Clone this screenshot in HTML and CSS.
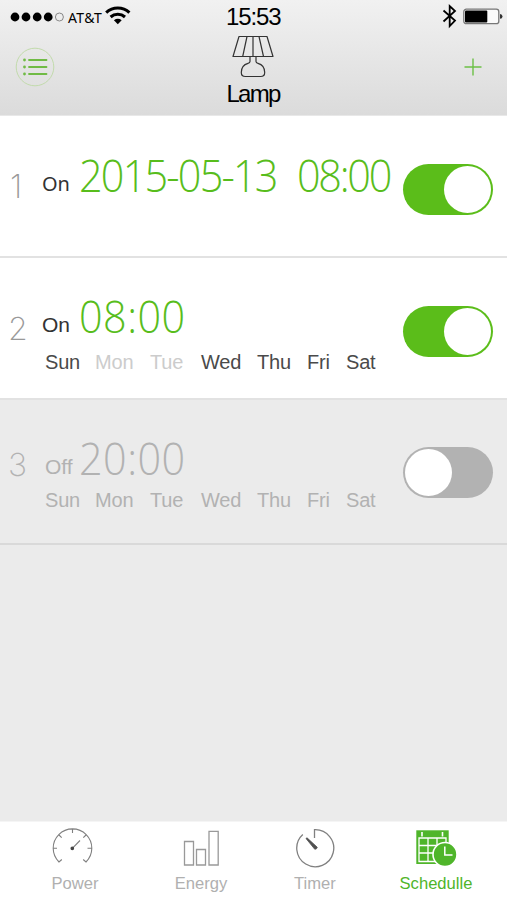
FILE: index.html
```html
<!DOCTYPE html>
<html lang="en">
<head>
<meta charset="utf-8">
<title>Lamp schedule</title>
<link rel="stylesheet" href="styles.css">
</head>
<body>
<div class="app">
  <header class="header">
    <div class="status">
      <div class="carrier">
        <svg class="signal" width="55" height="12" viewBox="0 0 55 12"><circle cx="5" cy="6" r="4.4"/><circle cx="16" cy="6" r="4.4"/><circle cx="27.2" cy="6" r="4.4"/><circle cx="38.2" cy="6" r="4.4"/><circle cx="49.4" cy="6" r="4" fill="none" stroke="#888" stroke-width="1"/></svg>
        <span class="operator">AT&amp;T</span>
        <svg class="wifi" width="26" height="20" viewBox="0 0 26 20"><path d="M1.2 7.6a17 17 0 0 1 23.2 0M5.6 12a11 11 0 0 1 14.4 0" fill="none" stroke="#000" stroke-width="3.1"/><path d="M8.9 15.2Q12.8 12.4 16.7 15.2L12.8 19.2Z"/></svg>
      </div>
      <div class="clock">15:53</div>
      <div class="power-state">
        <svg width="16" height="26" viewBox="0 0 16 26"><path d="M1.5 7.5L13 17.5L7.7 23V3L13 8L1.5 18.5" fill="none" stroke="#000" stroke-width="1.8"/></svg>
        <svg width="40" height="18" viewBox="0 0 40 18"><rect x=".8" y="1.2" width="35" height="14.5" rx="2.5" fill="#fafafa" stroke="#777" stroke-width="1.3"/><rect x="2" y="2.4" width="22.3" height="12.2" rx="1"/><path d="M37 6q2.5 .3 2.5 2.4T37 10.8z" fill="#333"/></svg>
      </div>
    </div>
    <div class="nav">
      <svg class="menu" width="40" height="40" viewBox="0 0 40 40"><circle cx="20" cy="20" r="18.8" fill="none" stroke="#c2dbac" stroke-width="1"/><path d="M14 13h17.5M14 20h17.5M14 27h17.5" fill="none" stroke="#70bb45" stroke-width="1.8" stroke-linecap="round"/><g fill="#70bb45"><circle cx="9.5" cy="13" r="1.4"/><circle cx="9.5" cy="20" r="1.4"/><circle cx="9.5" cy="27" r="1.4"/></g></svg>
      <div class="device">
        <svg width="42" height="43" viewBox="0 0 42 43" fill="none" stroke="#333" stroke-width="1.2" stroke-linejoin="round"><path d="M7 1.500h28L41 21.500H1zM15 1.500L10.700 21.500M21 1.500V21.500M27 1.500L31.500 21.500M18 21.500V26.500Q18 28 16 28.300C11.500 29.500 9.300 33 9.300 37.500Q9.300 41.500 13.300 41.500H28.700Q32.700 41.500 32.700 37.500C32.700 33 30.500 29.500 26 28.300Q24 28 24 26.500V21.500"/></svg>
        <div class="device-name">Lamp</div>
      </div>
      <svg class="add" width="20" height="20" viewBox="0 0 20 20"><path d="M1.5 10h17M10 1.500v17" stroke="#6cc046" stroke-width="1.4"/></svg>
    </div>
  </header>
  <main class="list">
    <section class="row dated">
      <div class="index">1</div>
      <div class="info">
        <div class="when"><span class="state">On</span><span class="time date">2015-05-13</span><span class="time hour">08:00</span></div>
      </div>
      <div class="switch"><div class="knob"></div></div>
    </section>
    <section class="row weekly">
      <div class="index">2</div>
      <div class="info">
        <div class="when"><span class="state">On</span><span class="time">08:00</span></div>
        <div class="days"><span>Sun</span><span class="skip">Mon</span><span class="skip">Tue</span><span>Wed</span><span>Thu</span><span>Fri</span><span>Sat</span></div>
      </div>
      <div class="switch"><div class="knob"></div></div>
    </section>
    <section class="row weekly off">
      <div class="index">3</div>
      <div class="info">
        <div class="when"><span class="state">Off</span><span class="time">20:00</span></div>
        <div class="days"><span>Sun</span><span>Mon</span><span>Tue</span><span>Wed</span><span>Thu</span><span>Fri</span><span>Sat</span></div>
      </div>
      <div class="switch"><div class="knob"></div></div>
    </section>
  </main>
  <nav class="tabs">
    <div class="tab power">
      <svg width="42" height="42" viewBox="0 0 42 42" fill="none" stroke="#808080" stroke-width="1.1"><path d="M9.800 32.500L7 35A19.300 19.300 0 1 1 34 35L31.200 32.500M1.500 21.300H5M35.500 21.300H39.500M20.500 2V6M7 8L9.700 10.700M34 8L31.300 10.700M20.300 21.300L28 13.500"/><circle cx="20.300" cy="21.300" r="1.300" fill="#444" stroke="#444"/></svg>
      <span>Power</span>
    </div>
    <div class="tab energy">
      <svg width="42" height="42" viewBox="0 0 42 42" fill="none" stroke="#999" stroke-width="1.300"><path d="M4.500 14.500H13.500V38H4.500zM16.500 22.500H25.500V38H16.500zM29 4.300H38.200V38H29z"/></svg>
      <span>Energy</span>
    </div>
    <div class="tab timer">
      <svg width="42" height="42" viewBox="0 0 42 42" fill="none" stroke="#808080" stroke-width="1.300"><path d="M20.500 11V2.700A18.500 18.500 0 1 1 8.800 7.500"/><path d="M12 11.500L13 10.800L23.300 20.300Q22.800 22.300 20.800 22.300Z" fill="#505050" stroke="#505050" stroke-width=".8"/></svg>
      <span>Timer</span>
    </div>
    <div class="tab schedule">
      <svg width="42" height="42" viewBox="0 0 42 42"><rect x="1.300" y="3.300" width="32.400" height="33.700" fill="#4fb52a"/><path d="M4 11H31V34.500H4z" fill="none" stroke="#fff" stroke-width="1.300"/><path d="M4 18.500H31M4 26H31M13 11V34.500M22 11V34.500" stroke="#fff" stroke-width="1.300"/><path d="M7 5V9.500M27.500 5V9.500" stroke="#fff" stroke-width="1.600"/><circle cx="30" cy="27.500" r="12" fill="#4fb52a" stroke="#fff" stroke-width="1.600"/><path d="M29.800 19.500V28H37.500" fill="none" stroke="#fff" stroke-width="1.500"/></svg>
      <span>Schedulle</span>
    </div>
  </nav>
</div>
</body>
</html>
```
FILE: styles.css
```css
* { box-sizing: border-box; }
body { margin: 0; background: #ebebeb; font-family: "Liberation Sans", Arial, sans-serif; }
svg { display: block; flex: none; }
.app { width: 507px; height: 900px; display: flex; flex-direction: column; overflow: hidden; }

.header { height: 116px; flex: none; background: linear-gradient(#f1f1f1, #e6e6e6 50%, #dbdbdb); border-bottom: 1px solid #e8e8e8; }
.status { height: 33px; display: grid; grid-template-columns: 226px 60px 1fr; }
.carrier { display: flex; align-items: flex-start; padding-left: 10px; }
.signal { margin-top: 11px; }
.operator { font: 14px/20px "Noto Sans", sans-serif; margin: 8px 0 0 3px; width: 36px; white-space: nowrap; letter-spacing: .4px; }
.wifi { margin: 5px 0 0 1px; }
.clock { font-size: 24px; line-height: 34px; letter-spacing: -1.1px; white-space: nowrap; }
.power-state { display: flex; justify-content: flex-end; padding: 3px 4px 0 0; gap: 5px; }
.power-state svg:last-child { margin-top: 5px; }
.nav { display: grid; grid-template-columns: 208px 60px 1fr; padding: 0 24px 0 15px; }
.menu { margin-top: 14px; }
.device { display: flex; flex-direction: column; align-items: center; margin: 2px 0 0 0; }
.device-name { font-size: 24px; line-height: 30px; letter-spacing: -1.7px; margin-top: 1px; }
.add { margin-top: 24px; justify-self: end; }

.list { flex: 1; }
.row { display: flex; height: 142px; background: #fff; border-bottom: 2px solid #e2e2e2; }
.row.off { height: 145px; background: #ebebeb; border-bottom-color: #d9d9d9; }
.index { width: 42px; padding: 51px 0 0 8px; font: 200 32px/40px Inter, sans-serif; color: #999; }
.dated .index { padding-left: 10px; }
.off .index { padding-top: 45px; }
.info { width: 361px; }
.when { display: flex; height: 80px; padding-top: 28px; white-space: nowrap; }
.state { width: 37px; font-size: 21px; line-height: 28px; margin-top: 25px; color: #333; }
.off .state { padding-left: 3px; }
.dated .state { font-family: "Noto Sans", sans-serif; font-size: 20px; margin-top: 26px; }
.time { font: 300 44px/60px "Open Sans", sans-serif; color: #58bd1c; letter-spacing: .5px; transform: scaleX(.94); transform-origin: 0 50%; }
.dated .time { letter-spacing: -1.9px; margin-top: 1px; }
.dated .hour { letter-spacing: -2.4px; }
.date { width: 218px; }
.days { display: grid; grid-template-columns: 50px 55px 51px 56px 50px 39px 40px; margin: 10px 0 0 3px; font-size: 20px; line-height: 28px; letter-spacing: -.2px; color: #4a4a4a; }
.off .days { margin-top: 6px; }
.skip { color: #ccc; }
.off .index, .off .state, .off .time, .off .days { color: #b2b2b2; }
.switch { width: 90px; height: 51px; border-radius: 26px; background: #5bbd1a; margin-top: 48px; padding: 2px; display: flex; justify-content: flex-end; }
.knob { width: 47px; height: 47px; border-radius: 50%; background: #fff; }
.off .switch { background: #b2b2b2; justify-content: flex-start; margin-top: 47px; }

.tabs { height: 79px; flex: none; background: #fff; border-top: 1px solid #f5f5f5; display: grid; grid-template-columns: 126px 114px 121px 80px; padding-left: 35px; }
.tab { width: 80px; padding-top: 5px; display: flex; flex-direction: column; align-items: center; font-size: 16.6px; line-height: 20px; color: #b0b0b0; }
.tab span { margin-top: 5px; }
.power svg { margin-right: 4px; }
.schedule { color: #4fb52a; }
```
